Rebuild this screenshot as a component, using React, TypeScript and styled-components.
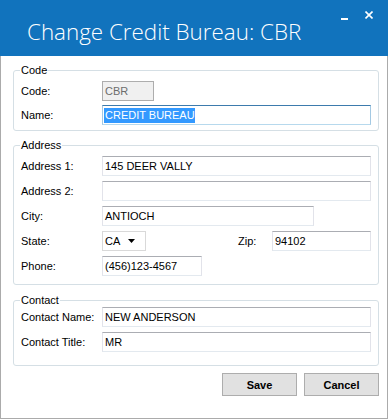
import styled, { createGlobalStyle } from "styled-components";

const GlobalStyle = createGlobalStyle`
  html, body {
    margin: 0;
    padding: 0;
    background: #ffffff;
  }
  body {
    font-family: "Liberation Sans", Arial, sans-serif;
    font-size: 11px;
    color: #000000;
  }
`;

function App(): JSX.Element {
  return (
    <>
      <GlobalStyle />
      <Window>
        <TitleBar>
          <Title>Change Credit Bureau: CBR</Title>
          <Controls>
            <svg width="7" height="9" viewBox="0 0 7 9">
              <rect x="0" y="7" width="7" height="2" fill="#ffffff" />
            </svg>
            <svg width="8" height="8" viewBox="0 0 8 8">
              <path d="M0.5 0.5 L7.5 7.5 M7.5 0.5 L0.5 7.5" stroke="#ffffff" strokeWidth="1.6" />
            </svg>
          </Controls>
        </TitleBar>

        <Body>
          <Group $top={0} $padTop={4} $padBottom={5}>
            <Legend>Code</Legend>
            <Grid $gap={4}>
              <Label>Code:</Label>
              <TextBox $width={52} $disabled>CBR</TextBox>
              <Label>Name:</Label>
              <TextBox $focused>
                <Selected>CREDIT BUREAU</Selected>
              </TextBox>
            </Grid>
          </Group>

          <Group $top={7} $padTop={4} $padBottom={8}>
            <Legend>Address</Legend>
            <Grid $gap={5}>
              <Label>Address 1:</Label>
              <TextBox>145 DEER VALLY</TextBox>
              <Label>Address 2:</Label>
              <TextBox />
              <Label>City:</Label>
              <TextBox $width={212}>ANTIOCH</TextBox>
              <Label>State:</Label>
              <Row>
                <Select>
                  CA
                  <svg width="7" height="4" viewBox="0 0 7 4">
                    <path d="M0 0 H7 L3.5 4 Z" fill="#000000" />
                  </svg>
                </Select>
                <ZipLabel>Zip:</ZipLabel>
                <TextBox $width={99}>94102</TextBox>
              </Row>
              <Label>Phone:</Label>
              <TextBox $width={100}>(456)123-4567</TextBox>
            </Grid>
          </Group>

          <Group $top={8} $padTop={0} $padBottom={13}>
            <Legend>Contact</Legend>
            <Grid $gap={5}>
              <Label>Contact Name:</Label>
              <TextBox>NEW ANDERSON</TextBox>
              <Label>Contact Title:</Label>
              <TextBox>MR</TextBox>
            </Grid>
          </Group>

          <Buttons>
            <Button>Save</Button>
            <Button>Cancel</Button>
          </Buttons>
        </Body>
      </Window>
    </>
  );
}

export default App;

const Window = styled.div`
  width: 388px;
  height: 419px;
  display: flex;
  flex-direction: column;
  background: #ffffff;
`;

const TitleBar = styled.div`
  height: 56px;
  flex-shrink: 0;
  background: #1173bd;
  display: flex;
  align-items: flex-start;
  justify-content: space-between;
  padding-left: 27px;
  box-sizing: border-box;
`;

const Title = styled.div`
  font-family: "Open Sans", "Noto Sans", sans-serif;
  font-weight: 300;
  font-size: 22.4px;
  line-height: 30px;
  padding-top: 17px;
  color: #ffffff;
  white-space: nowrap;
`;

const Controls = styled.div`
  display: flex;
  align-items: flex-start;
  gap: 17px;
  padding-top: 11px;
  padding-right: 15px;
`;

const Body = styled.div`
  flex: 1;
  border: 1px solid #ababab;
  border-top: none;
  padding: 7px 8px 0 12px;
  box-sizing: border-box;
  display: flex;
  flex-direction: column;
`;

const Group = styled.fieldset<{ $top: number; $padTop: number; $padBottom: number }>`
  margin: ${(p) => p.$top}px 0 0 0;
  min-width: 0;
  border: 1px solid #d5dfe5;
  border-radius: 3px;
  padding: ${(p) => p.$padTop}px 7px ${(p) => p.$padBottom}px 7px;
`;

const Legend = styled.legend`
  padding: 0 1px;
  margin-left: -1px;
  font-size: 11px;
  line-height: 14px;
  color: #000000;
`;

const Grid = styled.div<{ $gap: number }>`
  display: grid;
  grid-template-columns: 81px 1fr;
  row-gap: ${(p) => p.$gap}px;
  align-items: center;
`;

const Label = styled.div`
  font-size: 11px;
  line-height: 14px;
  white-space: nowrap;
`;

const TextBox = styled.div<{ $width?: number; $disabled?: boolean; $focused?: boolean }>`
  box-sizing: border-box;
  width: ${(p) => (p.$width ? `${p.$width}px` : "100%")};
  height: 20px;
  display: flex;
  align-items: center;
  padding: 0 2px;
  font-size: 11px;
  white-space: nowrap;
  overflow: hidden;
  border: 1px solid;
  border-color: ${(p) =>
    p.$focused
      ? "#3d7bad #a4c9e3 #b7d9ed #a4c9e3"
      : p.$disabled
      ? "#adadad"
      : "#abadb3 #e2e3ea #e3e9ef #e2e3ea"};
  background: ${(p) => (p.$disabled ? "#f0f0f0" : "#ffffff")};
  color: ${(p) => (p.$disabled ? "#6d6d6d" : "#000000")};
`;

const Selected = styled.span`
  display: inline-block;
  background: #3399ff;
  color: #ffffff;
  line-height: 15px;
  margin-left: -1px;
  padding-left: 1px;
`;

const Row = styled.div`
  display: flex;
  align-items: center;
`;

const Select = styled.div`
  box-sizing: border-box;
  width: 44px;
  height: 20px;
  display: flex;
  align-items: center;
  justify-content: space-between;
  padding: 0 10px 0 2px;
  border: 1px solid #d9d9d9;
  background: #ffffff;
  font-size: 11px;
`;

const ZipLabel = styled.div`
  margin-left: auto;
  width: 34px;
  font-size: 11px;
`;

const Buttons = styled.div`
  display: flex;
  justify-content: flex-end;
  gap: 7px;
  margin-top: 7px;
`;

const Button = styled.button`
  box-sizing: border-box;
  width: 75px;
  height: 23px;
  padding: 0;
  background: #e1e1e1;
  border: 1px solid #adadad;
  font-family: "Liberation Sans", Arial, sans-serif;
  font-weight: bold;
  font-size: 11px;
  color: #000000;
`;
